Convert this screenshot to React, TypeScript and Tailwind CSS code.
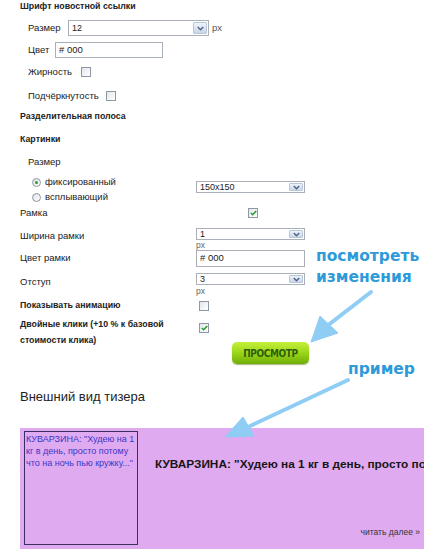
import { ReactNode } from 'react';

function Select({ value, width }: { value: string; width: string }) {
  return (
    <div className={`flex h-full items-stretch border border-[#a9b0b8] bg-white ${width}`}>
      <span className="flex-1 pl-[3px] text-[9px] leading-[12px] text-[#222] flex items-center">{value}</span>
      <span className="m-[1px] flex w-[14px] items-center justify-center rounded-[1px] border border-[#b8c6d8] bg-gradient-to-b from-[#eef3fa] to-[#c9d6e8]">
        <svg width="7" height="5" viewBox="0 0 7 5">
          <path d="M0.8 1 L3.5 3.7 L6.2 1" fill="none" stroke="#4d6185" strokeWidth="1.4" />
        </svg>
      </span>
    </div>
  );
}

function Check({ checked }: { checked?: boolean }) {
  return (
    <span className="flex h-[10px] w-[10px] items-center justify-center border border-[#8e98a4] bg-gradient-to-br from-[#e2e6ea] to-white">
      {checked && (
        <svg width="7" height="6" viewBox="0 0 7 6">
          <path d="M0.8 3 L2.7 4.8 L6.2 1" fill="none" stroke="#2a9a2a" strokeWidth="1.5" />
        </svg>
      )}
    </span>
  );
}

function Radio({ checked }: { checked?: boolean }) {
  return (
    <span className="flex h-[9px] w-[9px] items-center justify-center rounded-full border border-[#8e98a4] bg-gradient-to-br from-[#dde2e7] to-white">
      {checked && <span className="h-[3px] w-[3px] rounded-full bg-[#2e9a2e]" />}
    </span>
  );
}

function Row({ className, children }: { className: string; children: ReactNode }) {
  return <div className={`flex items-center ${className}`}>{children}</div>;
}

export default function App() {
  return (
    <div className="relative h-[549px] w-[424px] overflow-hidden bg-white text-[9.5px] text-[#222]" style={{ fontFamily: '"Liberation Sans", Arial, sans-serif' }}>
      <div className="flex flex-col">
        <Row className="h-[13px] pl-[20px] text-[8.8px] font-bold">Шрифт новостной ссылки</Row>

        <Row className="mt-[7px] h-[16px] pl-[28px]">
          <span className="w-[40px]">Размер</span>
          <Select value="12" width="w-[141px]" />
          <span className="ml-[3px] text-[#555]">px</span>
        </Row>
        <Row className="mt-[6px] h-[16px] pl-[28px]">
          <span className="w-[27px]">Цвет</span>
          <span className="flex h-full w-[108px] items-center border border-[#a9b0b8] pl-[3px] text-[9.5px]"># 000</span>
        </Row>
        <Row className="mt-[6px] h-[16px] pl-[28px]">
          <span className="w-[53px]">Жирность</span>
          <Check />
        </Row>
        <Row className="mt-[8px] h-[16px] pl-[28px]">
          <span className="w-[78px]">Подчёркнутость</span>
          <Check />
        </Row>

        <Row className="mt-[6px] h-[14px] pl-[20px] text-[8.8px] font-bold">Разделительная полоса</Row>
        <Row className="mt-[9px] h-[14px] pl-[20px] text-[8.8px] font-bold">Картинки</Row>
        <Row className="mt-[8px] h-[14px] pl-[28px]">Размер</Row>

        <div className="mt-[6px] flex">
          <div className="flex w-[196px] flex-col pl-[32px]">
            <div className="flex h-[15px] items-center gap-[4px]">
              <Radio checked />
              <span>фиксированный</span>
            </div>
            <div className="flex h-[15px] items-center gap-[4px]">
              <Radio />
              <span>всплывающий</span>
            </div>
          </div>
          <div className="mt-[6px] h-[12px]">
            <Select value="150x150" width="w-[109px]" />
          </div>
        </div>

        <Row className="mt-[1px] h-[14px] pl-[20px]">
          <span className="w-[228px]">Рамка</span>
          <Check checked />
        </Row>

        <div className="mt-[8px] flex">
          <span className="mt-[2px] w-[196px] pl-[20px] leading-[12px]">Ширина рамки</span>
          <div className="flex flex-col">
            <div className="h-[12px]">
              <Select value="1" width="w-[109px]" />
            </div>
            <span className="text-[8.5px] leading-[10px] text-[#666]">px</span>
          </div>
        </div>

        <Row className="h-[17px]">
          <span className="w-[196px] pl-[20px]">Цвет рамки</span>
          <span className="flex h-full w-[109px] items-center border border-[#a9b0b8] pl-[3px]"># 000</span>
        </Row>

        <div className="mt-[6px] flex">
          <span className="mt-[3px] w-[196px] pl-[20px] leading-[12px]">Отступ</span>
          <div className="flex flex-col">
            <div className="h-[12px]">
              <Select value="3" width="w-[109px]" />
            </div>
            <span className="text-[8.5px] leading-[12px] text-[#666]">px</span>
          </div>
        </div>

        <Row className="mt-[3px] h-[12px] text-[8.8px] font-bold">
          <span className="w-[199px] pl-[20px]">Показывать анимацию</span>
          <Check />
        </Row>

        <div className="mt-[4px] flex">
          <span className="w-[199px] pl-[20px] text-[8.8px] font-bold leading-[16px]">
            Двойные клики (+10 % к базовой
            <br />
            стоимости клика)
          </span>
          <div className="flex flex-col">
            <div className="mt-[7px]">
              <Check checked />
            </div>
            <button className="ml-[33px] mt-[9px] flex h-[22px] w-[77px] items-center justify-center rounded-[5px] bg-gradient-to-b from-[#c6f03a] via-[#9ad615] to-[#6fae0a] text-[10px] font-bold tracking-[-0.4px] text-[#2e5d0c] shadow-[0_1px_1px_rgba(80,110,0,0.5)]" style={{ fontFamily: '"DejaVu Sans Condensed", "Liberation Sans Narrow", sans-serif' }}>
              ПРОСМОТР
            </button>
          </div>
        </div>

        <div className="mt-[26px] h-[14px] pl-[20px] text-[13px] leading-[14px] text-[#222]">Внешний вид тизера</div>

        <div className="ml-[20px] mt-[24px] flex h-[125px] bg-[#e0aaf1]">
          <div className="ml-[4px] mt-[3px] h-[114px] w-[114px] shrink-0 border border-[#3a2e62] pl-[1px] pt-[1px] text-[9px] leading-[12px] text-[#3838c8]">
            КУВАРЗИНА: "Худею на 1 кг в день, просто потому что на ночь пью кружку..."
          </div>
          <div className="flex min-w-0 flex-1 flex-col overflow-hidden pl-[17px]">
            <div className="mt-[28px] whitespace-nowrap text-[11.8px] font-bold text-[#161616]">
              КУВАРЗИНА: "Худею на 1 кг в день, просто потому
            </div>
            <div className="mt-auto mb-[14px] self-end pr-[4px] text-[8.5px] text-[#333]">читать далее »</div>
          </div>
        </div>
      </div>

      <div className="absolute left-[316px] top-[246px] text-[15.5px] font-bold leading-[21px] text-[#2f9ad8]" style={{ fontFamily: '"DejaVu Sans", sans-serif' }}>
        посмотреть
        <br />
        изменения
      </div>
      <div className="absolute left-[348px] top-[359px] text-[15.5px] font-bold leading-[21px] text-[#2f9ad8]" style={{ fontFamily: '"DejaVu Sans", sans-serif' }}>
        пример
      </div>

      <svg className="pointer-events-none absolute left-0 top-0" width="424" height="549">
        <g fill="#8fcdf4" stroke="#8fcdf4">
          <line x1="371" y1="292" x2="327" y2="326" strokeWidth="4" strokeLinecap="round" />
          <polygon points="311,342 320,316 338,333" strokeWidth="1" strokeLinejoin="round" />
          <line x1="348" y1="380" x2="250" y2="426" strokeWidth="4" strokeLinecap="round" />
          <polygon points="225,437 243,417 254,436" strokeWidth="1" strokeLinejoin="round" />
        </g>
      </svg>
    </div>
  );
}
